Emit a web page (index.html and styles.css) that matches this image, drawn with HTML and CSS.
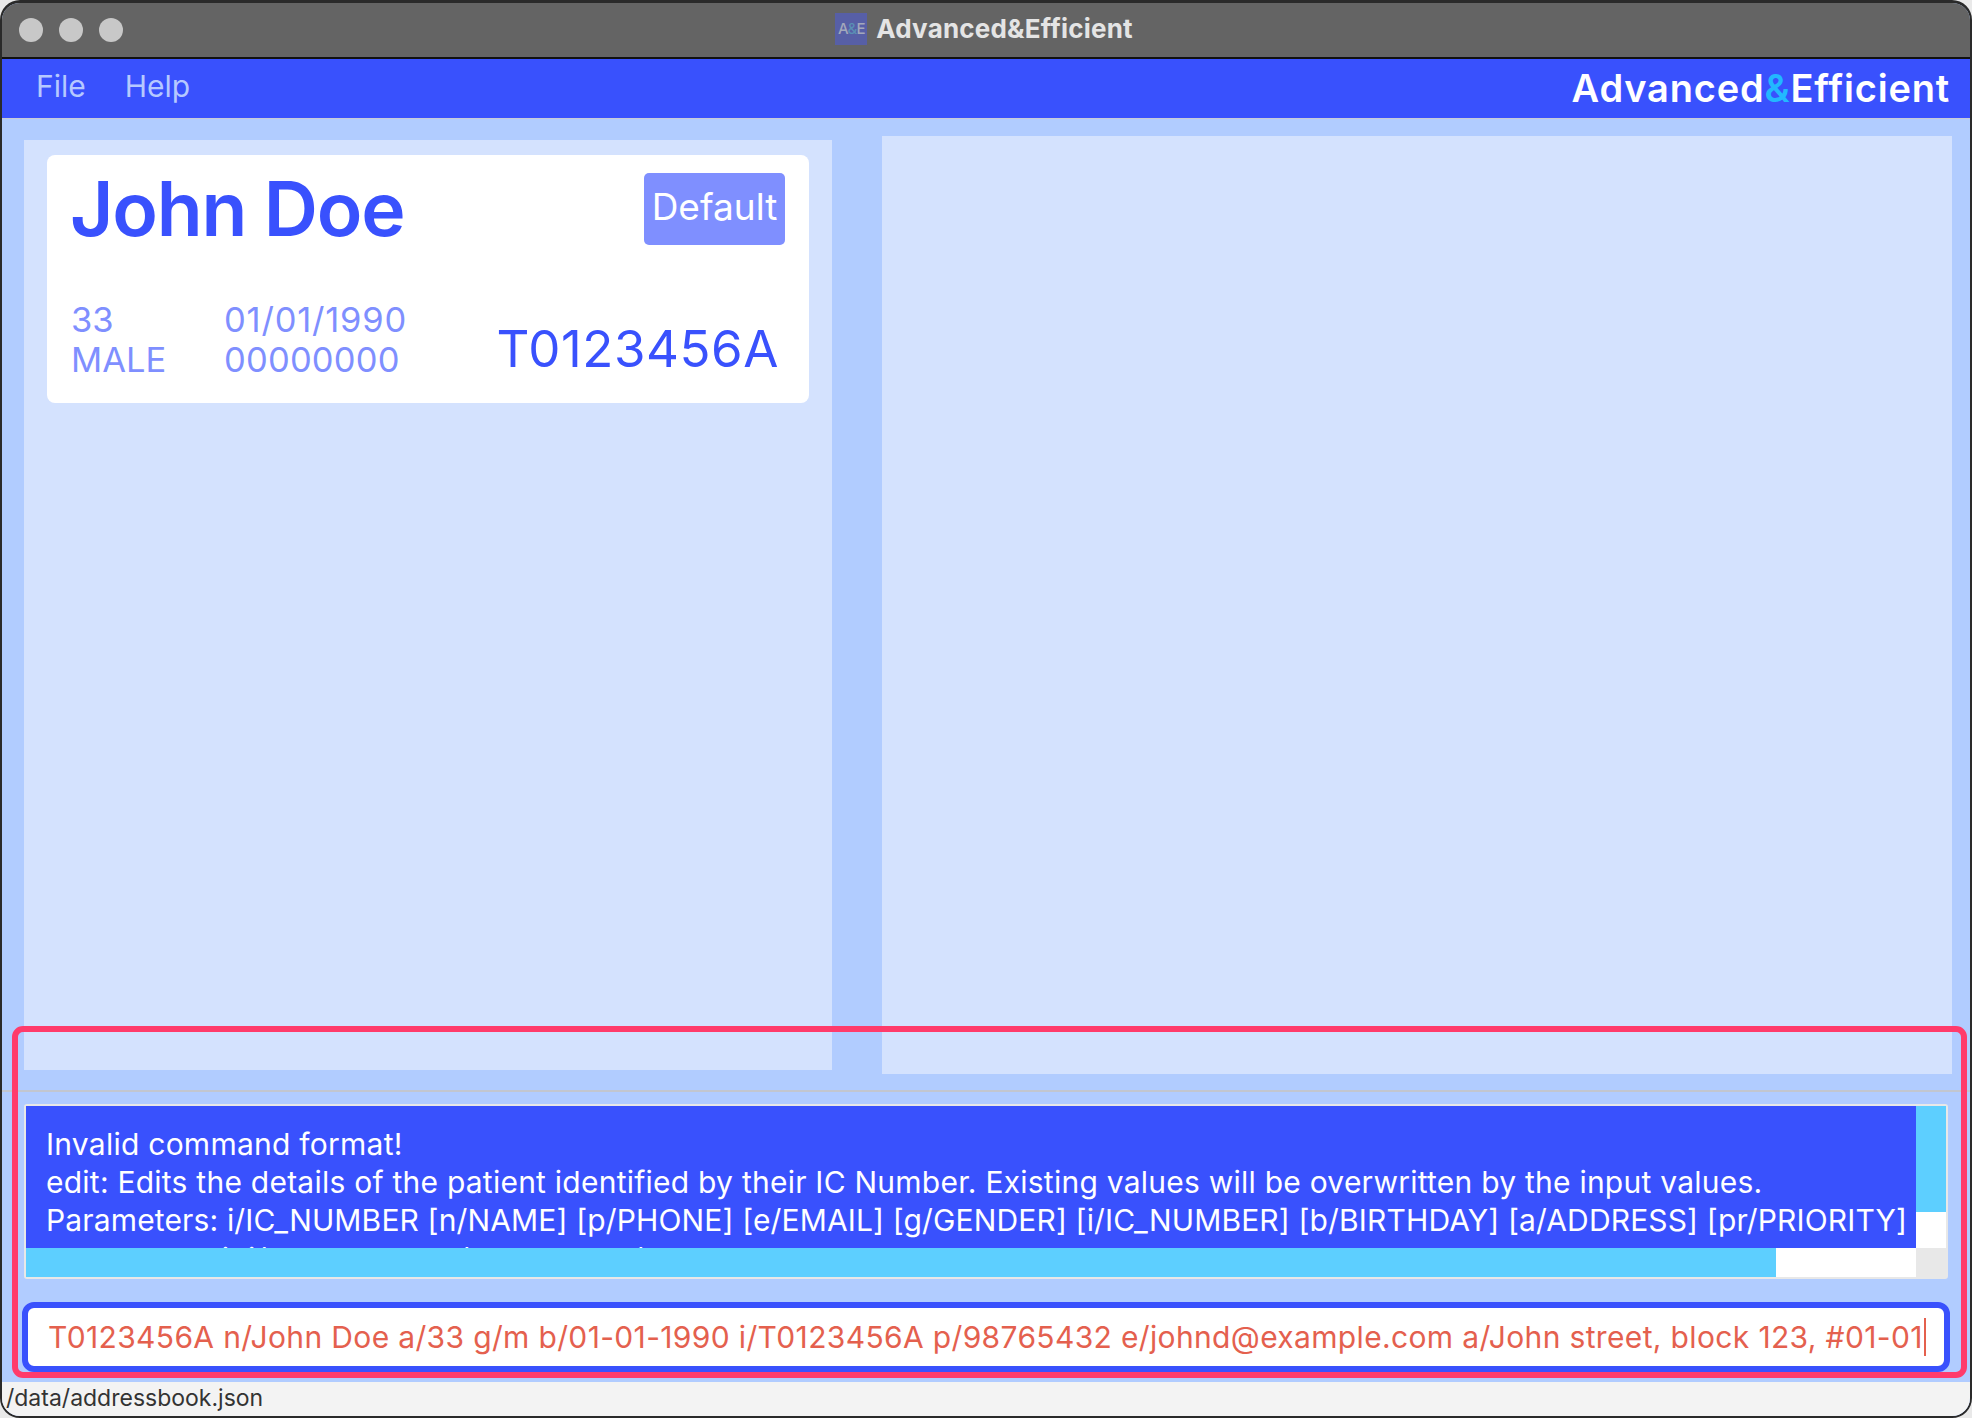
FILE: index.html
```html
<!DOCTYPE html>
<html lang="en">
<head>
<meta charset="utf-8">
<title>Advanced&amp;Efficient</title>
<link rel="stylesheet" href="styles.css">
</head>
<body>
<div class="window">
  <header class="titlebar">
    <div class="lights"><span class="light"></span><span class="light"></span><span class="light"></span></div>
    <div class="title">
      <span class="app-icon">A<span class="app-icon-amp">&amp;</span>E</span>
      <span class="title-text">Advanced&amp;Efficient</span>
    </div>
  </header>
  <nav class="menubar">
    <div class="menus"><span class="menu">File</span><span class="menu">Help</span></div>
    <div class="brand">Advanced<span class="brand-amp">&amp;</span>Efficient</div>
  </nav>
  <main class="content">
    <section class="split">
      <div class="list-panel">
        <article class="card">
          <div class="card-top">
            <h1 class="name">John Doe</h1>
            <span class="badge">Default</span>
          </div>
          <div class="card-bottom">
            <div class="meta">
              <div class="meta-col meta-col-a"><span>33</span><span>MALE</span></div>
              <div class="meta-col"><span class="date">01/01/1990</span><span class="phone">00000000</span></div>
            </div>
            <div class="ic">T0123456A</div>
          </div>
        </article>
      </div>
      <div class="detail-panel"></div>
    </section>
    <section class="bottom">
      <div class="result">
        <div class="result-text">
          <div class="line-a">Invalid command format!</div>
          <div class="line-b">edit: Edits the details of the patient identified by their IC Number. Existing values will be overwritten by the input values.</div>
          <div class="line-c">Parameters: i/IC_NUMBER [n/NAME] [p/PHONE] [e/EMAIL] [g/GENDER] [i/IC_NUMBER] [b/BIRTHDAY] [a/ADDRESS] [pr/PRIORITY]</div>
          <div class="line-d">Example: edit i/T0123456A n/John Doe p/98765432</div>
        </div>
        <div class="vscroll"><div class="vthumb"></div></div>
        <div class="hscroll"><div class="hthumb"></div></div>
        <div class="corner"></div>
      </div>
      <div class="command"><span class="command-text">T0123456A n/John Doe a/33 g/m b/01-01-1990 i/T0123456A p/98765432 e/johnd@example.com a/John street, block 123, #01-01</span><span class="caret"></span></div>
    </section>
    <div class="highlight"></div>
  </main>
  <footer class="status">/data/addressbook.json</footer>
</div>
</body>
</html>
```
FILE: styles.css
```css
* { box-sizing: border-box; }
html, body { margin: 0; padding: 0; background: #e9e9e9; }
body { font-family: Inter, "Noto Sans", sans-serif; }

.window {
  width: 1972px;
  height: 1418px;
  border: 2px solid #2a2a2a;
  border-top-width: 3px;
  border-radius: 20px;
  overflow: hidden;
  display: flex;
  flex-direction: column;
  background: #b1ccff;
}

.titlebar {
  height: 56px;
  flex: none;
  background: #646464;
  border-bottom: 2px solid #111;
  display: flex;
  align-items: center;
  justify-content: center;
  position: relative;
}
.lights {
  position: absolute;
  left: 17px;
  top: 15px;
  display: flex;
  gap: 16px;
}
.light { width: 24px; height: 24px; border-radius: 50%; background: #c8c8c8; }
.title { display: flex; align-items: center; gap: 9px; margin-top: -3px; margin-left: -4px; }
.app-icon {
  width: 32px;
  height: 32px;
  background: #575fa6;
  color: #a3a8bb;
  font-size: 15px;
  font-weight: 500;
  letter-spacing: -1px;
  display: flex;
  align-items: center;
  justify-content: center;
}
.app-icon-amp { color: #5a8fb4; }
.title-text { color: #e4e4e4; font-size: 26px; font-weight: 700; letter-spacing: 0.2px; }

.menubar {
  height: 60px;
  flex: none;
  background: #3951fd;
  border-bottom: 1px solid #c9ccd6;
  display: flex;
  align-items: center;
  justify-content: space-between;
  padding: 0 20px 1px 34px;
}
.menus { display: flex; gap: 39px; margin-bottom: 4px; }
.menu { color: #b6c9ff; font-size: 30px; }
.brand { color: #fff; font-size: 38px; font-weight: 600; letter-spacing: 0.8px; }
.brand-amp { color: #22b8ff; }

.content {
  flex: 1;
  display: flex;
  flex-direction: column;
  position: relative;
  min-height: 0;
}

.split {
  height: 973px;
  flex: none;
  display: flex;
  align-items: flex-start;
  padding-left: 22px;
  border-bottom: 2px solid #c2c6cf;
}
.list-panel {
  width: 808px;
  height: 930px;
  margin-top: 21px;
  background: #d4e2fe;
  padding: 15px 23px;
}
.detail-panel {
  width: 1070px;
  height: 938px;
  margin: 17px 0 0 50px;
  background: #d4e2fe;
}

.card {
  height: 248px;
  background: #fff;
  border-radius: 8px;
  padding: 18px 24px 23px 24px;
  display: flex;
  flex-direction: column;
  justify-content: space-between;
}
.card-top { display: flex; justify-content: space-between; align-items: flex-start; }
.name {
  margin: -1px 0 0 -1px;
  color: #3951fd;
  font-size: 75px;
  font-weight: 600;
  letter-spacing: -1.2px;
  line-height: 74px;
}
.badge {
  width: 141px;
  height: 72px;
  border-radius: 5px;
  background: #7f8fff;
  color: #fff;
  font-size: 37px;
  padding-bottom: 6px;
  display: flex;
  align-items: center;
  justify-content: center;
}
.card-bottom { display: flex; justify-content: space-between; align-items: flex-end; padding-right: 6px; }
.meta { display: flex; color: #7f8fff; font-size: 34.5px; line-height: 40px; }
.meta-col { display: flex; flex-direction: column; }
.meta-col-a { width: 153px; }
.date { letter-spacing: 0.8px; }
.phone { letter-spacing: 0.2px; }
.ic { color: #3951fd; font-size: 51px; letter-spacing: 0.55px; line-height: 60px; margin-bottom: 1px; }

.bottom {
  flex: 1;
  display: flex;
  flex-direction: column;
  padding: 12px 20px 10px 20px;
  gap: 23px;
}
.result {
  margin: 0 2px;
  width: 1924px;
  height: 175px;
  flex: none;
  border: 2px solid #e8e8e8;
  border-radius: 3px;
  display: grid;
  grid-template-columns: 1890px 30px;
  grid-template-rows: 142px 29px;
  background: #e8e8e8;
}
.result-text {
  background: #3951fd;
  color: #fff;
  font-size: 30px;
  line-height: 38px;
  padding: 19px 0 0 20px;
  overflow: hidden;
  white-space: nowrap;
}
.line-a { letter-spacing: 0.25px; }
.line-b { letter-spacing: 0.24px; }
.line-c { letter-spacing: 0.145px; }
.line-d { letter-spacing: 0.2px; margin-top: 1px; }
.vscroll { background: #fff; }
.vthumb { height: 106px; background: #5dcfff; }
.hscroll { background: #fff; }
.hthumb { width: 1750px; height: 100%; background: #5dcfff; }
.corner { background: #e8e8e8; }

.command {
  height: 70px;
  flex: none;
  width: 1928px;
  background: #fff;
  border: 6px solid #3951fd;
  border-radius: 12px;
  color: #e4604e;
  font-size: 30px;
  letter-spacing: 0.35px;
  display: flex;
  align-items: center;
  padding: 0 0 1px 20px;
  white-space: nowrap;
  overflow: hidden;
}
.caret { width: 2px; height: 38px; background: #e4604e; margin-left: 1px; flex: none; }

.highlight {
  position: absolute;
  left: 10px;
  top: 907px;
  width: 1955px;
  height: 352px;
  border: 6px solid #ff3b6b;
  border-radius: 11px;
  pointer-events: none;
}

.status {
  height: 34px;
  flex: none;
  background: #f3f3f3;
  color: #333;
  font-size: 23px;
  line-height: 33px;
  padding-left: 4px;
  white-space: nowrap;
}
```
